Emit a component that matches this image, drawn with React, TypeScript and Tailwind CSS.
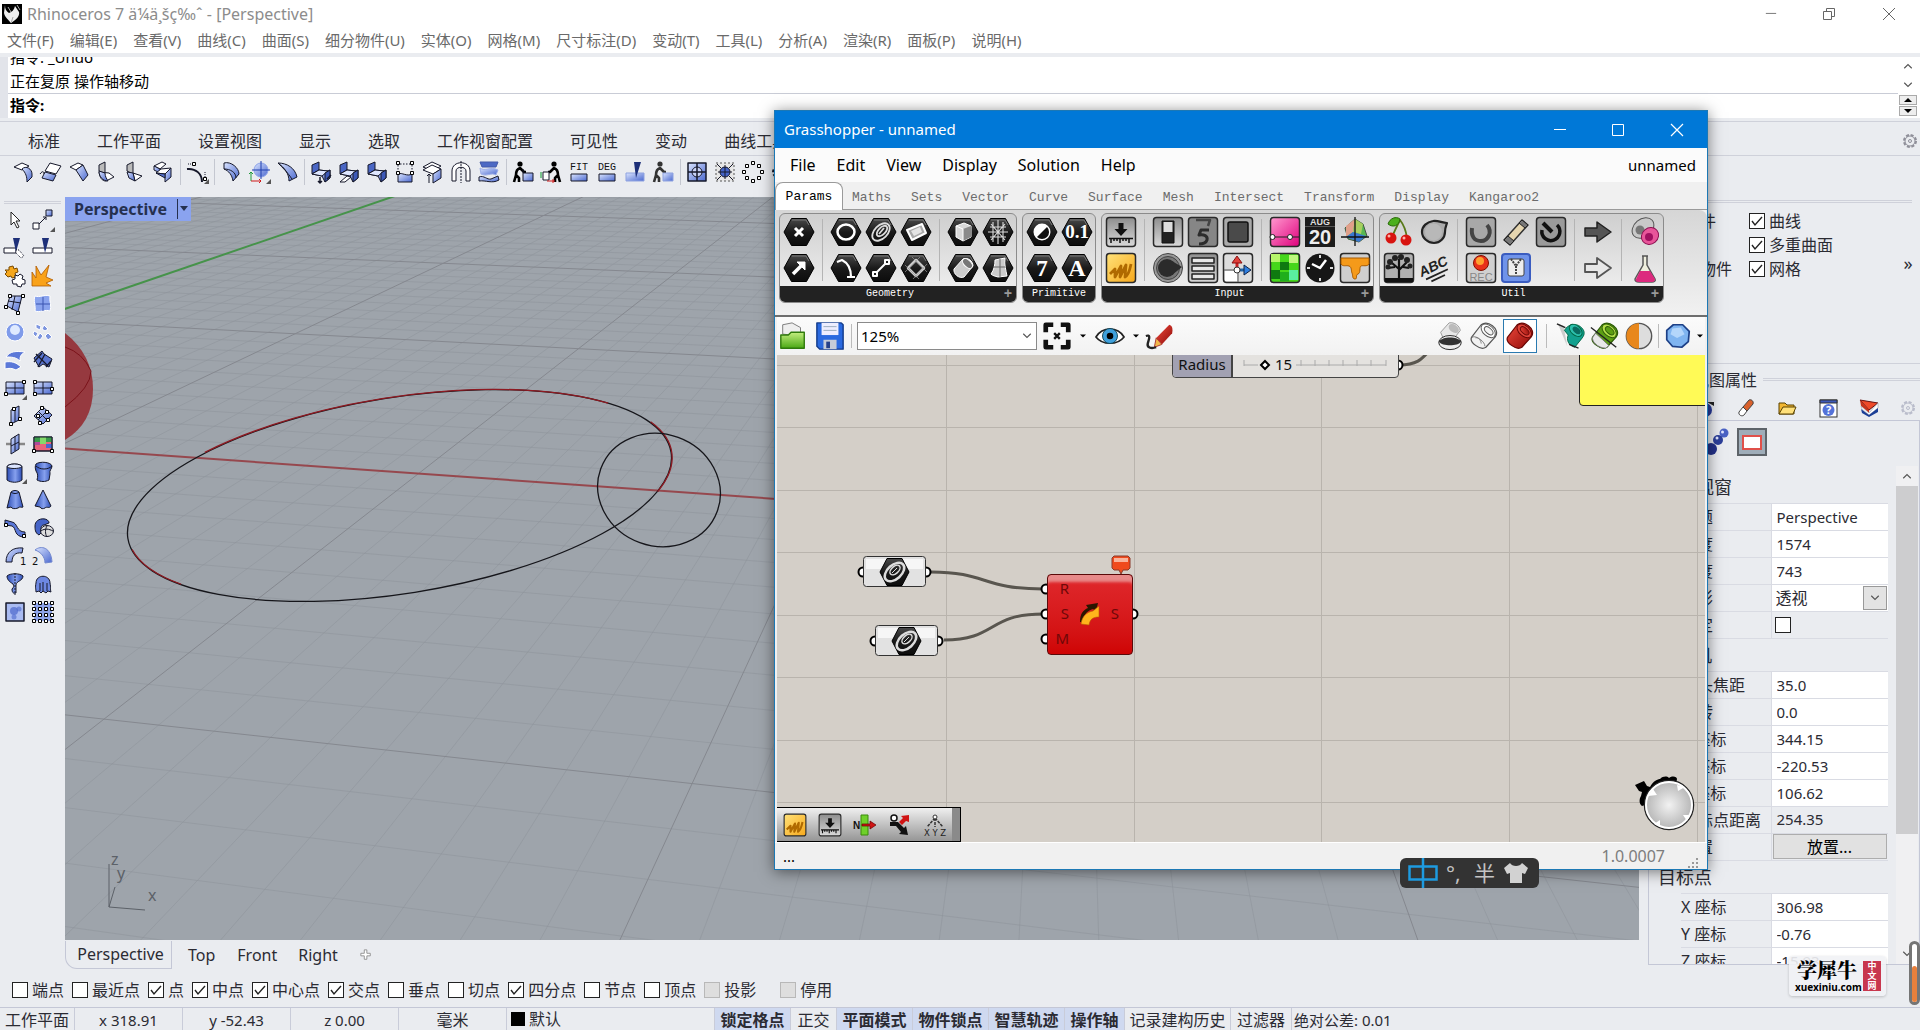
import type { ReactNode } from "react";

/* ---------- shared gradients ---------- */
function Gradients() {
  return (
    <svg className="absolute size-0" aria-hidden="true">
      <defs>
        <linearGradient id="bl" x1="0" y1="0" x2="1" y2="1">
          <stop offset="0" stopColor="#dbe5ff" />
          <stop offset="1" stopColor="#4a68cf" />
        </linearGradient>
        <linearGradient id="dk" x1="0" y1="0" x2="1" y2="0">
          <stop offset="0" stopColor="#2c4db4" />
          <stop offset="0.55" stopColor="#86a0ee" />
          <stop offset="1" stopColor="#2c4db4" />
        </linearGradient>
        <linearGradient id="hx" x1="0" y1="0" x2="0" y2="1">
          <stop offset="0" stopColor="#4a4a4a" />
          <stop offset="0.5" stopColor="#1a1a1a" />
          <stop offset="1" stopColor="#0c0c0c" />
        </linearGradient>
        <linearGradient id="gr" x1="0" y1="0" x2="0" y2="1">
          <stop offset="0" stopColor="#8e8e8e" />
          <stop offset="1" stopColor="#d9d9d9" />
        </linearGradient>
        <linearGradient id="pk" x1="0" y1="0" x2="1" y2="1">
          <stop offset="0" stopColor="#ff9ad0" />
          <stop offset="1" stopColor="#e0007c" />
        </linearGradient>
        <linearGradient id="rd" x1="0" y1="0" x2="1" y2="1">
          <stop offset="0" stopColor="#f04a3c" />
          <stop offset="1" stopColor="#8e0a08" />
        </linearGradient>
        <linearGradient id="gn" x1="0" y1="0" x2="0" y2="1">
          <stop offset="0" stopColor="#c4ee80" />
          <stop offset="1" stopColor="#4aa814" />
        </linearGradient>
        <linearGradient id="ye" x1="0" y1="0" x2="1" y2="1">
          <stop offset="0" stopColor="#ffe27a" />
          <stop offset="1" stopColor="#f7a81b" />
        </linearGradient>
        <radialGradient id="ball" cx="0.5" cy="0.5" r="0.5">
          <stop offset="0" stopColor="#f2f2f2" />
          <stop offset="1" stopColor="#b4b4b4" />
        </radialGradient>
      </defs>
    </svg>
  );
}

/* ---------- Rhino icons, 24 x 24 ---------- */
function R({ children }: { children: ReactNode }) {
  return (
    <svg viewBox="0 0 24 24" className="size-6 shrink-0" fill="url(#bl)" stroke="#16182a" strokeWidth="1" strokeLinejoin="round">
      {children}
    </svg>
  );
}
const Corner = () => <path d="M24 19v5h-5z" fill="#555" stroke="none" />;
const Sq = ({ x, y }: { x: number; y: number }) => <rect x={x - 1.5} y={y - 1.5} width="3" height="3" fill="#fff" stroke="#000" />;
/* the S-shaped sheet shared by the blend and match commands */
const Step = () => (
  <>
    <path d="M3 5l7-3v8l-7 4z" fill="#4a66c4" />
    <path d="M10 10l9 1 2-1v8l-5 4-3-6-10-2z" />
    <path d="M3 14l7-4 9 1-6 5z" fill="#dfe7ff" />
    <path d="M16 13l5-3v8l-5 4z" fill="#3d59b8" />
  </>
);
const Person = ({ c }: { c: string }) => (
  <>
    <circle cx="9" cy="4" r="2.6" fill={c} stroke="none" />
    <path d="M3 22l2-7 3 3v4M5 15c0-4 1-6 4-7l4 4 2 0" fill="none" stroke={c} strokeWidth="2.600" />
  </>
);

const topGroups: { name: string; icon: ReactNode }[][] = [
  [
    { name: "曲面圆角", icon: <R><path d="M3 7l8-4 7 3-7 4z" fill="#fff" /><path d="M11 9c4-4 10 0 10 5v3l-5 5c0-5-1-9-5-13z" /></R> },
    { name: "延伸曲面", icon: <R><path d="M11 3l11 3-5 8-11-3z" fill="#fff" /><path d="M6 12l11 3-3 6-11-3z" /><path d="M1 14c3-4 4-2 4 0" fill="none" /></R> },
    { name: "曲面斜角", icon: <R><path d="M3 7l8-4 5 2-7 5z" fill="#fff" /><path d="M9 10l7-5 5 10-5 6z" /></R> },
    { name: "不等距圆角", icon: <R><path d="M4 5l6-3v12l-6-3z" fill="#bbb" /><path d="M4 12c1 6 3 9 7 9l8-4-5-4z" fill="#fff" /><path d="M4 11l6 2c0 4 2 6 3 8-5 0-9-4-9-10z" /></R> },
    { name: "不等距斜角", icon: <R><path d="M4 5l6-3v12l-6-3z" fill="#bbb" /><path d="M10 13l9 3-7 5z" fill="#fff" /><path d="M4 12l6 1 2 8-6-3z" /></R> },
    { name: "混接曲面", icon: <R><path d="M3 6l8-4 4 2-6 5z" fill="#fff" /><path d="M3 6l6 3v4l-6-3z" /><path d="M5 13l5-4 10-1-6 6z" fill="#fff" /><path d="M14 14l6-6v9l-6 5z" /><path d="M5 13l9 1v4z" fill="#5672d0" /></R> },
  ],
  [{ name: "可调式混接曲线", icon: <R><path d="M2 9c9-1 15 5 15 13" fill="none" strokeWidth="2" /><path d="M3 4h5m12 8v6" fill="none" strokeDasharray="1 1" /><Sq x={9} y={4} /><Sq x={20} y={19} /><Corner /></R> }],
  [
    { name: "偏移曲面", icon: <R><path d="M5 3c7-2 15 5 15 11l-6 7c-1-6-4-10-9-12z" /><path d="M5 9c6 0 12 3 12 9" fill="none" /></R> },
    { name: "设置工作平面", icon: <R><circle cx="14" cy="10" r="7" stroke="#8fa4e8" /><path d="M14 1v18M5 10h18" fill="none" stroke="#1f3fae" /><path d="M4 12v9m-2-7l2-2 2 2" stroke="#1f9a3a" fill="none" /><path d="M4 21h10m-2-2l2 2-2 2" stroke="#d01818" fill="none" /><Corner /></R> },
    { name: "对称曲面", icon: <R><path d="M3 3c9 0 17 5 19 14l-8 4c0-7-4-13-11-18z" /><path d="M3 3c5 5 10 10 14 16" fill="none" /></R> },
  ],
  [
    { name: "移动曲面", icon: <R><Step /><path d="M11 17v6m-2-2l2 2 2-2M18 19l4-4" fill="none" strokeWidth="1.500" /></R> },
    { name: "衔接曲面", icon: <R><Step /><path d="M3 22l7-6 4 1-6 5z" fill="#fff" /></R> },
    { name: "合并曲面", icon: <R><Step /></R> },
    { name: "调整边缘", icon: <R><path d="M5 14c4-2 9 3 14 0v8H5z" /><path d="M4 4h16M5 5v7m14-7v7" fill="none" strokeDasharray="1.5 1.5" /><Sq x={5} y={3} /><Sq x={19} y={3} /><Sq x={5} y={13} /><Sq x={19} y={13} /></R> },
    { name: "叠层", icon: <R><path d="M2 7l9-5 9 4-8 5z" fill="#fff" /><path d="M2 10l9-5 9 4-8 5z" fill="#fff" /><path d="M12 14l8-5v9l-8 5z" /><path d="M8 23v-9m-2 2l2-2 2 2" fill="none" /></R> },
    { name: "对称", icon: <R><path d="M3 21V11c0-11 18-11 18 0v10h-4V11c0-5-10-5-10 0v10z" fill="#fff" /><path d="M12 1v22" strokeDasharray="2 1" fill="none" /></R> },
    { name: "重建", icon: <R><path d="M3 2h18l-2 5H5z" stroke="#445aa8" fill="#4d69c4" /><path d="M3 8c5 4 10-2 18 2l-2 5c-5-3-9 2-15-1z" stroke="#9fb0ea" /><path d="M2 17c5-2 8 3 12 2l7-3 1 4c-7 4-13 0-20 1z" /></R> },
  ],
  [
    { name: "推", icon: <R><Person c="#000" /><rect x="12" y="13" width="10" height="8" /><path d="M12 13V9" /></R> },
    { name: "拉", icon: <R><g transform="translate(24 0) scale(-1 1)"><Person c="#000" /></g><rect x="4" y="12" width="6" height="8" fill="#fff" /><path d="M2 12v6" stroke="#0a9a2a" /><path d="M8 21h8m-2-2v4" stroke="#d01818" /></R> },
    { name: "FIT", icon: <R><text x="12" y="10" textAnchor="middle" fontSize="10" fill="#111" stroke="none" fontFamily="Liberation Mono">FIT</text><rect x="4" y="14" width="16" height="7" /></R> },
    { name: "DEG", icon: <R><text x="12" y="10" textAnchor="middle" fontSize="10" fill="#111" stroke="none" fontFamily="Liberation Mono">DEG</text><rect x="4" y="14" width="16" height="7" /></R> },
    { name: "切割", icon: <R><path d="M3 13h18v8H3z" stroke="#8ea2e0" /><path d="M11 2h7l-5 16z" fill="#1d2f78" stroke="none" /></R> },
    { name: "收缩", icon: <R><Person c="#333" /><rect x="12" y="13" width="10" height="8" stroke="#8ea2e0" /></R> },
  ],
  [
    { name: "球面", icon: <R><rect x="3" y="3" width="18" height="18" strokeWidth="1.500" /><circle cx="12" cy="12" r="5" fill="#c9d3f7" /><path d="M12 3v18M3 12h18" fill="none" strokeWidth="1.500" /></R> },
    { name: "方向", icon: <R><rect x="3" y="3" width="18" height="18" fill="#e6e6e6" stroke="#555" strokeDasharray="2 2" /><circle cx="12" cy="12" r="5" fill="#4564c8" /><path d="M12 5v14M5 12h14M4 4l4 4m12-4l-4 4M4 20l4-4m12 4l-4-4" fill="none" /></R> },
    { name: "阵列", icon: <R><Sq x={12} y={3} /><Sq x={18} y={6} /><Sq x={21} y={12} /><Sq x={18} y={18} /><Sq x={12} y={21} /><Sq x={6} y={18} /><Sq x={3} y={12} /><Sq x={6} y={6} /></R> },
    { name: "更多", icon: <R><circle cx="9" cy="12" r="5" fill="none" strokeWidth="2" strokeDasharray="3 2" /></R> },
  ],
];

const leftIcons: { name: string; icon: ReactNode }[] = [
  { name: "选择", icon: <R><path d="M8 4v13l3-3 3 6 2-1-3-6h4z" fill="#fff" stroke="#222" /></R> },
  { name: "移动点", icon: <R><path d="M8 16l7-7m-3 0h3v3" fill="none" /><rect x="2" y="15" width="6" height="6" fill="#fff" /><rect x="15" y="2" width="6" height="6" /><Corner /></R> },
  { name: "修剪", icon: <R><path d="M1 12h12v5H1z" fill="#fff" /><path d="M10 2h7l-4 14z" fill="#1d2f78" stroke="none" /><path d="M13 14l3 0 5 6-3 2-5-5z" fill="#fff" strokeDasharray="1 1" /></R> },
  { name: "分割", icon: <R><path d="M2 12h19v5H2z" fill="#fff" /><path d="M11 2h7l-4 15z" fill="#1d2f78" stroke="none" /></R> },
  { name: "组合", icon: <R><path d="M2 6l4 0 0-3 4-1 1 3 3-1 1 4-3 1 1 4-4 1-1-2-3 1-3-3 2-2z" fill="#f5a71c" stroke="#7a4a00" /><path d="M12 11l3 1 2-2 3 2-1 3 3 1 0 4-3 0-1 3-4-1 0-2-4 0-1-4 3-1z" fill="#fff" /></R> },
  { name: "炸开", icon: <R><path d="M1 8l4 6V2l5 9 8-10-3 12 7 3-7 3 5 3H1z" fill="#f9a21a" stroke="#b05a00" strokeWidth="0.8" /></R> },
  { name: "角点曲面", icon: <R><path d="M7 4l12 0-4 16-11-6z" /><path d="M12 4l-3 14M5 9l13 2" fill="none" /><Sq x={7} y={4} /><Sq x={20} y={4} /><Sq x={3} y={15} /><Sq x={15} y={21} /></R> },
  { name: "网线曲面", icon: <R><path d="M4 4c5 2 9-2 15 0-1 5 2 10 0 15-5-2-10 2-15 0 1-5-2-10 0-15z" stroke="#fff" fill="#8aa4ee" /><path d="M12 5v14M5 12h14" stroke="#3a55b0" fill="none" /></R> },
  { name: "球体", icon: <R><circle cx="12" cy="12" r="9" stroke="#fff" fill="#7f9bea" /><circle cx="12" cy="10" r="5" fill="#dfeaff" stroke="none" /></R> },
  { name: "放样", icon: <R><g stroke="#fff" fill="#7d95df"><path d="M5 4l5 2-1 4-4-2zM13 5l4 4-3 2-3-2zM3 11l4 2-2 4-3-3zM17 13l4 4-4 3-3-4zM9 13l3 3-3 4-3-2z" /></g></R> },
  { name: "双轨扫掠", icon: <R><path d="M3 9c4-6 10-6 19-5-5 3-5 5-5 9-4-4-9-4-14-4z" stroke="#fff" fill="#5b78d8" /><path d="M2 14c6-1 11 0 16 5l-5 3c-4-2-7-2-11-1z" stroke="#fff" fill="#5b78d8" /></R> },
  { name: "嵌面", icon: <R><path d="M3 10l8-7 2 3 8 5-3 8-6-3-4 3z" fill="#5a75d0" /><path d="M5 6l12 12M3 14l8-9M14 6l-7 13m13-6l-5 6" fill="none" strokeWidth="1.300" /></R> },
  { name: "矩形平面", icon: <R><rect x="3" y="6" width="18" height="12" /><path d="M12 6v12M3 12h18" fill="none" /><Sq x={21} y={6} /><Sq x={3} y={18} /><Corner /></R> },
  { name: "三点平面", icon: <R><rect x="3" y="6" width="18" height="12" /><path d="M12 6v12M3 12h18" fill="none" /><Sq x={4} y={6} /><Sq x={4} y={18} /><Sq x={21} y={13} /></R> },
  { name: "垂直平面", icon: <R><path d="M8 6l8-4v14l-8 4z" /><path d="M12 4v14" fill="none" /><Sq x={11} y={5} /><Sq x={17} y={15} /><Sq x={8} y={20} /></R> },
  { name: "逼近点平面", icon: <R><path d="M12 3l9 8-9 9-9-8z" /><path d="M7 7l9 9M16 7l-9 9" fill="none" /><Sq x={11} y={4} /><Sq x={16} y={8} /><Sq x={7} y={12} /><Sq x={17} y={16} /><Sq x={9} y={19} /></R> },
  { name: "切割用平面", icon: <R><path d="M3 12h19" stroke="#888" strokeWidth="2.5" /><path d="M8 7l8-5v15l-8 5z" /><path d="M12 4v15M8 14l8-4" fill="none" /></R> },
  { name: "图片平面", icon: <R><path d="M3 5h18v14H3z" fill="#e9637a" /><path d="M3 5h18v5H3z" fill="#3a9a4a" stroke="none" /><path d="M9 5h6v7H9z" fill="#84d96a" stroke="none" /><path d="M15 12h6v4h-6z" fill="#4a66d0" stroke="none" /><path d="M3 10h6v3H3z" fill="#b04a9a" stroke="none" /><rect x="3" y="5" width="18" height="14" fill="none" /><Sq x={3} y={19} /><Sq x={21} y={19} /></R> },
  { name: "挤出", icon: <R><path d="M4 7c0-4 15-4 15 0v13c-4 3-11 3-15 0z" fill="url(#dk)" /><path d="M4 7c3 2 11 2 15 0 0-4-15-4-15 0z" fill="#dbe5ff" /><Corner /></R> },
  { name: "沿曲线挤出", icon: <R><path d="M5 4c4-3 15-2 16 2 0 3-3 4-2 8l-1 6c-4 2-8 2-12 0 1-4 1-6-1-9-1-3-1-5 0-7z" fill="url(#dk)" /><path d="M5 6c4 4 12 4 16 0" fill="none" /></R> },
  { name: "锥状挤出", icon: <R><path d="M8 4c2-2 6-2 8 0l4 15c-2 1-3-1-5 1-3 1-6 1-7-1l-4 1z" fill="url(#dk)" /><path d="M8 4c2 2 6 2 8 0" fill="none" /></R> },
  { name: "挤出至点", icon: <R><path d="M12 2l8 16c-2 3-4 0-6 2-2 1-4 1-5-1l-5-1z" fill="url(#dk)" /></R> },
  { name: "彩带", icon: <R><path d="M2 4l7 2c6 1 4 10 13 10v5c-12 0-8-9-13-11L2 9z" fill="#5b78d8" /><Sq x={3} y={9} /><Sq x={21} y={20} /></R> },
  { name: "往曲面法线挤出", icon: <R><path d="M4 10c0-9 14-9 14-3l-5 2c-4 0-3 5-2 7l-3 3c-4-2-4-6-4-9z" fill="#4564c8" /><ellipse cx="16" cy="15" rx="6.500" ry="5.500" fill="#ddd" /><path d="M10 15c4-3 8-2 12 0M16 10c-2 3-2 8 0 11" fill="none" /></R> },
  { name: "单轨扫掠", icon: <R><path d="M3 18C3 8 10 3 20 4l-1 5c-7-1-10 3-10 9z" /><text x="17" y="21" fontSize="10" fill="#111" stroke="none" fontFamily="DejaVu Sans">1</text></R> },
  { name: "双轨扫掠二", icon: <R><path d="M4 6c6-5 16-3 17 12l-7 1c0-6-4-11-10-13z" stroke="#7288cf" /><text x="1" y="21" fontSize="10" fill="#111" stroke="none" fontFamily="DejaVu Sans">2</text></R> },
  { name: "旋转成形", icon: <R><path d="M4 4c3-3 13-3 16 0 0 5-7 5-7 9v8c-3 1-4-1-4-4 2-2 2-3 1-5-3-2-6-4-6-8z" fill="url(#dk)" /><path d="M12 1v22" strokeDasharray="2 1" fill="none" /></R> },
  { name: "布帘曲面", icon: <R><path d="M5 20c0-3-1-4 0-9 0-9 14-9 14 0 1 5 0 6 1 9l-3-1-2 2-3-2-2 2-2-2z" fill="#6d88e2" /><path d="M9 11v8m3-9v9m4-8v8" fill="none" /></R> },
  { name: "高度场", icon: <R><rect x="3" y="3" width="18" height="18" fill="#a9bbf2" strokeWidth="1.500" /><circle cx="11" cy="11" r="4" fill="#4b66cc" stroke="none" opacity=".7" /><circle cx="16" cy="9" r="2.500" fill="#4b66cc" stroke="none" opacity=".6" /><circle cx="11" cy="17" r="2.500" fill="#4b66cc" stroke="none" opacity=".6" /></R> },
  {
    name: "点格曲面",
    icon: (
      <R>
        <rect x="3" y="3" width="18" height="18" fill="#8ea4ea" stroke="none" />
        {[3, 9, 15, 21].map((x) => [3, 9, 15, 21].map((y) => <Sq key={`${x}-${y}`} x={x} y={y} />))}
      </R>
    ),
  },
];

/* ---------- Grasshopper icons, 32 x 32 ---------- */
function G({ children }: { children: ReactNode }) {
  return (
    <svg viewBox="0 0 32 32" className="size-8 shrink-0" fill="none" strokeLinejoin="round">
      {children}
    </svg>
  );
}
function Hex({ children }: { children: ReactNode }) {
  return (
    <G>
      <polygon points="8.500,2.500 23.500,2.500 31,16 23.500,29.500 8.500,29.500 1,16" fill="url(#hx)" stroke="#000" />
      <path d="M9 4h14l3 5" stroke="#777" />
      <g stroke="#fff" strokeWidth="2">{children}</g>
    </G>
  );
}
function Box({ children, fill = "url(#gr)" }: { children: ReactNode; fill?: string }) {
  return (
    <G>
      <rect x="1.500" y="1.500" width="29" height="29" rx="3" fill={fill} stroke="#2a2a2a" strokeWidth="1.500" />
      {children}
    </G>
  );
}
const Scribble = () => <Box fill="url(#ye)"><path d="M5 22l5-5 0 8 6-11-1 11 6-12-1 12c4-2 5-8 6-13" stroke="#b06a00" strokeWidth="2.800" /></Box>;
const SliderBox = () => <Box><path d="M13.500 7h5v6h4L16 20l-6.500-7h4z" fill="#111" /><path d="M4 22.500h24M6 22v5m3-5v3m3-3v3m3-3v5m3-5v3m3-3v3m3-3v5" stroke="#111" strokeWidth="1.500" /></Box>;
const Drum = ({ top, side, line = "#333" }: { top: string; side: string; line?: string }) => (
  <>
    <path d="M3 17L13 4c4-3 8-2 12 1s6 8 3 12L18 28c-3 2-7 1-11-2s-6-6-4-9z" fill={side} stroke={line} strokeWidth="1.300" />
    <ellipse cx="20.500" cy="10.500" rx="5.500" ry="9" transform="rotate(-48 20.500 10.500)" fill={top} stroke={line} />
    <ellipse cx="21" cy="10.500" rx="3" ry="5.500" transform="rotate(-48 21 10.500)" fill={side} stroke={line} />
  </>
);

type Cell = { name: string; icon: ReactNode };
type Panel = { title: string; more: boolean; groups: Cell[][] };
/* every group lists its cells column by column */
const panels: Panel[] = [
  {
    title: "Geometry",
    more: true,
    groups: [
      [
        { name: "Point", icon: <Hex><path d="M12 12l8 8m0-8l-8 8" strokeWidth="3" /></Hex> },
        { name: "Vector", icon: <Hex><path d="M10 22l8-8" strokeWidth="3.500" /><path d="M14 10h8v8z" fill="#fff" strokeWidth="1" /></Hex> },
      ],
      [
        { name: "Circle", icon: <Hex><ellipse cx="16" cy="16" rx="8.500" ry="7.500" strokeWidth="2.500" /></Hex> },
        { name: "Circular Arc", icon: <Hex><path d="M7 10l5-2c6 3 9 9 9 17M17 25h8" strokeWidth="2.200" /></Hex> },
        { name: "Curve", icon: <Hex><g strokeWidth="1.800" stroke="#ddd"><ellipse cx="16" cy="16" rx="10.500" ry="6.500" transform="rotate(-45 16 16)" /><ellipse cx="17" cy="15" rx="6.500" ry="3.500" transform="rotate(-45 17 15)" /><path d="M14 18l5-6" /></g></Hex> },
        { name: "Line", icon: <Hex><path d="M11 21L21 11" /><path d="M8 20h4v4H8zM20 8h4v4h-4z" fill="#222" /></Hex> },
        { name: "Plane", icon: <Hex><path d="M7 14l15-6 4 9-14 7z" fill="#aaa" /><path d="M11 15l9-4 2 5-8 4z" fill="#e4e4e4" stroke="none" /></Hex> },
        { name: "Rectangle", icon: <Hex><path d="M16 8l8 8-8 8-8-8z" stroke="#ccc" strokeWidth="2.500" /><path d="M12 5l15 15M20 5L5 20M5 13l14 14M27 12L13 27" strokeWidth="0.700" stroke="#999" /></Hex> },
      ],
      [
        { name: "Box", icon: <Hex><path d="M9 10l8-3 7 3v11l-8 4-7-4z" fill="#d8d8d8" strokeWidth="1" /><path d="M16 13l8-3v11l-8 4z" fill="#8a8a8a" stroke="none" /><path d="M9 10l7 3v12" strokeWidth="1" /></Hex> },
        { name: "Brep", icon: <Hex><path d="M7 17l9-10c5-2 10 2 10 7l-9 11c-5 2-11-3-10-8z" fill="#ccc" strokeWidth="1" /><ellipse cx="20.500" cy="11.500" rx="3.500" ry="6" transform="rotate(-45 20.500 11.500)" fill="#777" strokeWidth="1" /></Hex> },
        { name: "Mesh", icon: <Hex><g strokeWidth="1.100" stroke="#ddd"><path d="M16 4v24M6 16h20M9 8l14 16M23 8L9 24M8 11h16M8 21h16M11 6v20M21 6v20" /></g></Hex> },
        { name: "Surface", icon: <Hex><path d="M13 8l10-2c-1 7 1 12 2 18l-9 1c-3-1-5-1-7-3 3-4 4-9 4-14z" fill="#ccc" strokeWidth="1" /><path d="M18 7v18M12 15h11" stroke="#666" strokeWidth="1" /></Hex> },
      ],
    ],
  },
  {
    title: "Primitive",
    more: false,
    groups: [
      [
        { name: "Boolean", icon: <Hex><circle cx="16" cy="16" r="7.500" fill="#fff" /><path d="M21 11A7 7 0 0 1 11 21z" fill="#111" stroke="none" /></Hex> },
        { name: "Integer", icon: <Hex><text x="16" y="24" textAnchor="middle" fontSize="23" fontWeight="bold" fill="#fff" stroke="none" fontFamily="Liberation Serif">7</text></Hex> },
        { name: "Number", icon: <Hex><text x="16" y="22" textAnchor="middle" fontSize="19" fontWeight="bold" fill="#fff" stroke="none" fontFamily="Liberation Serif">0.1</text></Hex> },
        { name: "Text", icon: <Hex><text x="16" y="24" textAnchor="middle" fontSize="24" fontWeight="bold" fill="#fff" stroke="none" fontFamily="Liberation Serif">A</text></Hex> },
      ],
    ],
  },
  {
    title: "Input",
    more: true,
    groups: [
      [
        { name: "Number Slider", icon: <SliderBox /> },
        { name: "Panel", icon: <Scribble /> },
      ],
      [
        { name: "Boolean Toggle", icon: <Box><rect x="10" y="5" width="12" height="22" fill="#222" stroke="#111" /><rect x="11.500" y="6" width="9" height="10" fill="#ddd" /></Box> },
        { name: "Knob", icon: <G><circle cx="16" cy="16" r="14.500" fill="#999" stroke="#444" /><circle cx="16" cy="16" r="11.500" fill="#777" stroke="#444" /><circle cx="15" cy="16" r="9" fill="#2b2b2b" /><path d="M20 9l10 6-10 8z" fill="#2b2b2b" /></G> },
        { name: "Digit Scroller", icon: <Box fill="#868686"><path d="M9 4h14l-2 6" stroke="#444" strokeWidth="2.500" /><path d="M22 14h-8l-2 5c5-1 9 1 8 5-1 3-4 4-8 4" stroke="#2c2c2c" strokeWidth="3" /></Box> },
        { name: "Value List", icon: <Box><path d="M5 6h22v5H5zM5 14h22v5H5zM5 22h22v5H5z" fill="#e8e8e8" stroke="#222" strokeWidth="1.500" /></Box> },
        { name: "Button", icon: <Box fill="#aaa"><rect x="6" y="6" width="20" height="20" rx="2" fill="#4a4a4a" stroke="#111" strokeWidth="1.500" /></Box> },
        { name: "MD Slider", icon: <Box fill="#ddd"><path d="M3 19h12v10H3z" fill="#fff" /><path d="M2 18h14v12" stroke="#555" /><path d="M15 18V11" stroke="#c22" strokeWidth="3" /><path d="M10 11l5-7 5 7z" fill="#e0403a" stroke="#811" /><path d="M15 18h8" stroke="#26a" strokeWidth="3" /><path d="M22 13l7 5-7 5z" fill="#2f7fe0" stroke="#124" /><circle cx="15" cy="18" r="3" fill="#fff" stroke="#333" /></Box> },
      ],
      [
        { name: "Gradient", icon: <Box fill="url(#pk)"><path d="M2 21h28" stroke="#222" /><circle cx="3.500" cy="21" r="2.500" fill="#fff" stroke="#222" /><circle cx="21" cy="21" r="2.500" fill="#fff" stroke="#222" /></Box> },
        { name: "Colour Swatch", icon: <Box fill="#45d61a"><path d="M2 2h9v8H2z" fill="#b6f56a" /><path d="M20 3h9v8h-9z" fill="#bff77e" /><path d="M11 10h9v8h-9zM2 18h9v9H2z" fill="#0f7a10" /><path d="M20 18h9v10h-9z" fill="#5af0a0" /><path d="M11 20h9v9h-9z" fill="#1fae1c" /></Box> },
        { name: "Calendar", icon: <G><rect x="1" y="1" width="30" height="30" fill="#1c1c1c" /><text x="16" y="9" textAnchor="middle" fontSize="9" fontWeight="bold" fill="#ddd" fontFamily="Liberation Sans">AUG</text><path d="M1 10.500h30" stroke="#555" /><text x="16" y="28" textAnchor="middle" fontSize="20" fontWeight="bold" fill="#eee" fontFamily="Liberation Sans">20</text></G> },
        { name: "Clock", icon: <G><circle cx="16" cy="16" r="14.500" fill="#161616" /><path d="M8 12l8 4 6-8" stroke="#fff" strokeWidth="2.500" /><path d="M16 3v3m0 20v3M3 16h3m20 0h3" stroke="#ddd" strokeWidth="2" /></G> },
        { name: "Colour Picker", icon: <G><path d="M16 3l8 5 4 12-8 6-11-3-3-11z" fill="#58b850" stroke="#454" /><path d="M7 10l9-7-2 13-7 5z" fill="#e0a08a" /><path d="M14 16l2-13 8 5-2 10z" fill="#a8cf60" /><path d="M7 21l7-5 13 4-7 6z" fill="#3a78d0" /><path d="M16 1v29M2 21h28" stroke="#111" strokeWidth="1.300" /></G> },
        { name: "Image Sampler", icon: <Box fill="#cfcfcf"><path d="M2 6h28v6c-2 3-6 1-8 2s0 7-3 8 0 5-3 5-2-4-3-6 0-6-3-7-6 1-8-2z" fill="#f59a1a" stroke="#a85a00" /></Box> },
      ],
    ],
  },
  {
    title: "Util",
    more: true,
    groups: [
      [
        { name: "Cherry Picker", icon: <G><path d="M9 21C12 14 15 8 17 4c4 5 6 11 7 18" stroke="#5a7a1a" strokeWidth="1.800" /><path d="M5 8c2-6 8-8 12-5-1 7-7 9-12 5z" fill="#4caf1c" stroke="#2a6a0a" /><circle cx="8" cy="22" r="5.500" fill="#d81410" /><circle cx="23" cy="24" r="5.500" fill="#d81410" /><circle cx="6" cy="20" r="1.500" fill="#ffb0a8" /><circle cx="21" cy="22" r="1.500" fill="#ffb0a8" /></G> },
        { name: "Param Viewer", icon: <Box fill="#b0b0b0"><path d="M16 29V17l-7-6m7 7l8-8M16 18V7m-4 8l-7 1m15-1l6 1" stroke="#111" strokeWidth="2.200" /><g fill="#222"><circle cx="7" cy="10" r="3" /><circle cx="12" cy="6" r="3" /><circle cx="18" cy="5" r="3" /><circle cx="24" cy="8" r="3" /><circle cx="27" cy="14" r="2.500" /><circle cx="5" cy="15" r="2.500" /></g><path d="M2 28h28" stroke="#111" strokeWidth="4" /></Box> },
        { name: "Relay", icon: <G><path d="M29 7c-1 3-2 5-2 9 0 6-5 11-11 11S4 22 4 16 9 6 15 5c5-1 9 2 14 2z" fill="#aaa" stroke="#222" strokeWidth="2.200" /><circle cx="15.500" cy="16" r="8.500" fill="#b8b8b8" /></G> },
        { name: "Scribble", icon: <G><g transform="rotate(-25 16 16)"><text x="16" y="19" textAnchor="middle" fontSize="14" fontWeight="bold" fontStyle="italic" fill="#222" fontFamily="Liberation Sans">ABC</text><path d="M4 23h24M8 27h15" stroke="#222" strokeWidth="1.800" /></g></G> },
      ],
      [
        { name: "Data Dam", icon: <Box fill="#a8a8a8"><path d="M7 12c-1 8 2 13 9 13s12-9 6-16" stroke="#444" strokeWidth="4" /></Box> },
        { name: "Data Recorder", icon: <Box fill="#d0d0d0"><circle cx="16" cy="11" r="7.500" fill="#e8301a" stroke="#801000" /><circle cx="15" cy="9" r="4" fill="#ffa030" /><text x="16" y="29" textAnchor="middle" fontSize="11" fill="#888" fontFamily="Liberation Sans">REC</text></Box> },
        { name: "Fitness Landscape", icon: <G><path d="M4 24L22 4l6 5-18 20z" fill="#e6d6b0" stroke="#333" strokeWidth="1.500" /><path d="M4 24l4-4 6 5-4 4zM19 7l3-3 6 5-3 3z" fill="#777" stroke="#222" /></G> },
        { name: "Cluster", icon: <G><rect x="2" y="2" width="28" height="28" rx="3" fill="#6f93ea" stroke="#3a5cc0" strokeWidth="2" /><rect x="8" y="7" width="16" height="17" rx="2" fill="#eee" stroke="#444" /><path d="M11 7l5 7 5-7M16 14v9" stroke="#444" strokeWidth="2" strokeDasharray="2 1" /></G> },
        { name: "Timer", icon: <Box fill="#9a9a9a"><path d="M7 14a9 9 0 1 0 15-5" stroke="#111" strokeWidth="3.500" /><path d="M8 7l9 9" stroke="#111" strokeWidth="4" /></Box> },
      ],
      [
        { name: "Data Output", icon: <G><path d="M3 12h12V6l14 10-14 10v-6H3z" fill="#555" stroke="#222" strokeWidth="1.500" /></G> },
        { name: "Data Input", icon: <G><path d="M3 12h12V6l14 10-14 10v-6H3z" fill="#e8e8e8" stroke="#555" strokeWidth="1.800" /></G> },
      ],
      [
        { name: "Galapagos", icon: <G><ellipse cx="14" cy="12" rx="12" ry="9" transform="rotate(-40 14 12)" fill="#c9c9c9" stroke="#555" /><circle cx="11" cy="14" r="4.500" fill="#777" /><ellipse cx="21" cy="20" rx="9" ry="8" transform="rotate(-40 21 20)" fill="#e8559a" stroke="#8a1050" /><circle cx="20" cy="21" r="4" fill="#a01060" /></G> },
        { name: "Flask", icon: <G><path d="M13 4h6M14 4v9L6 27c0 2 2 3 4 3h13c2 0 4-1 3-3L18 13V4" fill="#eed" stroke="#555" strokeWidth="1.500" /><path d="M11 19h10l5 8c0 2-1 3-3 3H10c-3 0-4-1-3-3z" fill="#dc2a7e" /></G> },
      ],
    ],
  },
];

/* ---------- viewport drawing ---------- */
type P = [number, number, number];
const ORIGIN: P = [-338, 227.5, 1];
const VANISH_X: P = [-6895, -238, 1];
const VANISH_Y: P = [1005, -232, 1];
/* projects construction-plane coordinates (in major grid units) to the viewport */
function project(u: number, v: number) {
  const a = -0.0477 * u;
  const b = 0.2945 * v;
  const w = 1 + a + b;
  return [
    (ORIGIN[0] + a * VANISH_X[0] + b * VANISH_Y[0]) / w,
    (ORIGIN[1] + a * VANISH_X[1] + b * VANISH_Y[1]) / w,
  ];
}
function lineAt(a: number[], b: number[]) {
  return `M${a[0].toFixed(1)} ${a[1].toFixed(1)}L${b[0].toFixed(1)} ${b[1].toFixed(1)}`;
}
const minor: string[] = [];
const major: string[] = [];
for (let i = -20; i <= 110; i++) {
  const u = i / 10;
  const end = project(u, 6);
  const start = project(u, Math.max(-2.8, -(0.95 - 0.0477 * u) / 0.2945));
  if (i !== 0) (i % 10 === 0 ? major : minor).push(lineAt(start, end));
}
for (let i = -20; i <= 60; i++) {
  const v = i / 10;
  if (i !== 0) (i % 10 === 0 ? major : minor).push(lineAt(project(-4, v), project(11, v)));
}

function Viewport() {
  return (
    <div className="relative min-h-0 flex-1 overflow-hidden bg-[#9ea4ab]">
      <svg className="absolute inset-0 size-full" fill="none" aria-label="Perspective viewport">
        <path d={minor.join("")} stroke="#8e949b" strokeWidth="1" opacity=".55" />
        <path d={major.join("")} stroke="#85888f" strokeWidth="1" />
        <path d={lineAt(project(0, 0), project(0, 6))} stroke="#46934a" strokeWidth="2" />
        <path d={lineAt(project(0, 0), project(11, 0))} stroke="#96484e" strokeWidth="2" />
        <path d="M0 136Q28 158 28 192T0 243z" fill="#96393f" />
        <path d="M0 150Q18 156 26 174Q26 190 0 210" stroke="#7a1219" />
        <g strokeWidth="1.300">
          <g transform="rotate(-9 334.500 298.500)">
            <ellipse cx="334.500" cy="298.500" rx="275" ry="98" stroke="#15151a" />
            <path d="M149 225.500A275 98 0 0 1 555 240" stroke="#8e1a22" />
            <path d="M594 265A275 98 0 0 1 590 335" stroke="#8e1a22" />
            <path d="M62 310A275 98 0 0 0 105 352" stroke="#8e1a22" />
          </g>
          <ellipse cx="594" cy="293" rx="62" ry="56" transform="rotate(20 594 293)" stroke="#15151a" />
        </g>
        <path d="M44 667v43l36 3M44 710l6-20" stroke="#5c6168" />
        <g fill="#5c6168" fontSize="16" fontFamily="Noto Sans">
          <text x="46" y="668">z</text>
          <text x="52" y="682">y</text>
          <text x="83" y="704">x</text>
        </g>
      </svg>
      <div className="relative flex h-6 w-[126px] items-center bg-[#8aa3ef]">
        <span className="w-[112px] pl-[9px] text-[16px] font-bold leading-5 text-[#25304f]">Perspective</span>
        <button aria-label="视图菜单" className="flex h-5 items-center border-l border-[#25304f] pl-px">
          <svg viewBox="0 0 10 6" className="h-[6px] w-[10px]"><path d="M1 0h8L5 5z" fill="#25304f" /></svg>
        </button>
      </div>
    </div>
  );
}

/* ---------- form bits ---------- */
function Tick({ label, checked = false, disabled = false }: { label: string; checked?: boolean; disabled?: boolean }) {
  return (
    <label className="inline-flex items-center gap-1 whitespace-nowrap text-[16px] leading-5">
      <span className="grid">
        <input
          type="checkbox"
          aria-label={label}
          defaultChecked={checked}
          disabled={disabled}
          className="peer col-start-1 row-start-1 size-4 appearance-none border border-[#222] bg-white disabled:border-[#b8b8b8] disabled:bg-[#dedede]"
        />
        <svg viewBox="0 0 16 16" className="pointer-events-none invisible col-start-1 row-start-1 size-4 peer-checked:visible">
          <path d="M3 8l3 4 7-8" fill="none" stroke="#222" strokeWidth="1.400" />
        </svg>
      </span>
      <span>{label}</span>
    </label>
  );
}
const Gear = ({ c }: { c: string }) => (
  <svg viewBox="0 0 16 16" className="size-4 shrink-0" fill="none" stroke={c}>
    <circle cx="8" cy="8" r="6" strokeWidth="2" strokeDasharray="3 1.700" />
    <circle cx="8" cy="8" r="5" />
    <circle cx="8" cy="8" r="1.500" />
  </svg>
);
const Chevron = ({ up = false }: { up?: boolean }) => (
  <svg viewBox="0 0 12 8" className="h-[6px] w-[10px]" fill="none" stroke="#555" strokeWidth="1.500"><path d={up ? "M1 7l5-5 5 5" : "M1 1l5 5 5-5"} /></svg>
);
const Caret = () => <svg viewBox="0 0 8 4" className="h-1 w-[6px] shrink-0"><path d="M0 0h8L4 4z" fill="#000" /></svg>;

/* ---------- right panel ---------- */
type Row = { label: string; value?: string; kind?: "select" | "check" | "static" | "button" };
const sections: { title: string; rows: Row[] }[] = [
  {
    title: "视窗",
    rows: [
      { label: "标题", value: "Perspective" },
      { label: "宽度", value: "1574" },
      { label: "高度", value: "743" },
      { label: "投影", value: "透视", kind: "select" },
      { label: "锁定", kind: "check" },
    ],
  },
  {
    title: "摄像机",
    rows: [
      { label: "镜头焦距", value: "35.0" },
      { label: "旋转", value: "0.0" },
      { label: "X 座标", value: "344.15" },
      { label: "Y 座标", value: "-220.53" },
      { label: "Z 座标", value: "106.62" },
      { label: "目标点距离", value: "254.35", kind: "static" },
      { label: "位置", value: "放置...", kind: "button" },
    ],
  },
  {
    title: "目标点",
    rows: [
      { label: "X 座标", value: "306.98" },
      { label: "Y 座标", value: "-0.76" },
      { label: "Z 座标", value: "-15.93" },
    ],
  },
];

function Value({ row }: { row: Row }) {
  if (row.kind === "select")
    return (
      <div className="grid h-[26px] items-center bg-white">
        <select aria-label={row.label} className="col-start-1 row-start-1 h-[26px] w-full appearance-none bg-transparent pl-1 text-[16px]">
          <option>{row.value}</option>
        </select>
        <span className="pointer-events-none col-start-1 row-start-1 mr-px flex h-6 w-6 items-center justify-center justify-self-end border border-[#999] bg-[#e3e3e3]"><Chevron /></span>
      </div>
    );
  if (row.kind === "check") return <input type="checkbox" aria-label={row.label} className="ml-[3px] block size-4 appearance-none border border-[#222] bg-white" />;
  if (row.kind === "static") return <span className="block pl-[5px] text-[15px]">{row.value}</span>;
  if (row.kind === "button") return <button className="ml-px h-[25px] w-[114px] border border-[#adadad] bg-[#e1e1e1] text-[16px] leading-5 text-black">{row.value}</button>;
  return <input aria-label={row.label} defaultValue={row.value} className="block h-[26px] w-full bg-white pl-[5px] text-[15px]" />;
}

function RightPanel() {
  return (
    <aside className="flex w-[281px] shrink-0 flex-col text-[#2b2b33]">
      <div className="mx-2 mt-[3px] h-[3px] shrink-0 border-y border-[#cfd1da]" />
      <div className="flex h-[160px] shrink-0 pl-[9px] pt-[8px]">
        <div className="flex w-[101px] flex-col gap-1">
          <Tick label="点物件" checked />
          <Tick label="曲面" checked />
          <Tick label="细分物件" checked />
        </div>
        <div className="flex flex-1 flex-col gap-1">
          <Tick label="曲线" checked />
          <Tick label="多重曲面" checked />
          <Tick label="网格" checked />
        </div>
        <button aria-label="展开" className="mr-[2px] mt-[40px] h-6 w-5 text-[18px] leading-4">»</button>
      </div>
      <div className="ml-[9px] flex min-h-0 flex-col border-t border-[#cfd1da]">
        <div className="flex h-[31px] items-center gap-[6px] pl-[45px]">
          <span className="text-[16px]">视图属性</span>
          <span className="h-[3px] flex-1 border-y border-[#cfd1da]" />
        </div>
        <div className="flex h-[25px] items-center gap-[21px] pl-[47px]">
          <svg viewBox="0 0 20 20" className="size-5"><circle cx="10" cy="12" r="7" fill="#26399a" /><path d="M12 4h7v4z" fill="#222" /></svg>
          <svg viewBox="0 0 20 20" className="size-5" stroke="#444"><path d="M7 9l6-7c2-1 5 1 4 4l-6 7z" fill="#d8602c" /><path d="M7 9l4 4-3 4c-2 2-6 0-5-3z" fill="#fff" /></svg>
          <svg viewBox="0 0 20 20" className="size-5" stroke="#5a4300"><path d="M2 16V5h6l2 2h7v9z" fill="#f2b632" /><path d="M2 16l4-7h13l-3 7z" fill="#ffe07a" /></svg>
          <svg viewBox="0 0 20 20" className="size-5" stroke="#333"><rect x="2" y="2" width="17" height="17" fill="#fff" /><path d="M2 2h17v3H2z" fill="#3d59b8" /><circle cx="10.500" cy="12" r="6" fill="#5472d8" stroke="none" /><text x="10.500" y="16" textAnchor="middle" fontSize="11" fontWeight="bold" fill="#fff" stroke="none">?</text></svg>
          <svg viewBox="0 0 20 20" className="size-5"><path d="M1 2l18 3-9 7z" fill="#ee4a2a" stroke="#611" /><path d="M1 2l9 10v3L2 8z" fill="#c8321a" /><path d="M2 8l8 7 9-10v5l-9 7-7-6z" fill="#fff" stroke="#889" strokeWidth=".5" /><path d="M2 11l8 6 9-7v4l-9 5-7-4z" fill="#1c3f96" /></svg>
          <Gear c="#b9bccb" />
        </div>
        <div className="flex min-h-0 flex-col border border-[#c4c7d6] pr-px">
          <div className="flex h-[45px] items-start gap-2 pl-[56px] pt-[7px]">
            <svg viewBox="0 0 24 28" className="h-7 w-6"><circle cx="19" cy="5" r="4.500" fill="#4a62c4" /><circle cx="13" cy="12" r="5" fill="#2c3f9a" /><circle cx="6" cy="21" r="6" fill="#23318a" /><circle cx="17.500" cy="4" r="1.500" fill="#dfe5ff" /><circle cx="12" cy="10" r="1.500" fill="#dfe5ff" /></svg>
            <button aria-label="视图" className="flex h-7 w-[30px] items-center justify-center border-2 border-[#5d6369] bg-[#9fadb9]">
              <span className="h-[15px] w-5 border-2 border-[#e0504a] bg-white" />
            </button>
          </div>
          <div className="flex h-[498px]">
            <div className="mr-2 flex-1 overflow-hidden pl-[9px]">
              <table className="w-full table-fixed border-collapse">
                <colgroup><col className="w-[23px]" /><col className="w-[90px]" /><col /></colgroup>
                {sections.map((s) => (
                  <tbody key={s.title}>
                    <tr><th colSpan={3} className={s.title === "视窗" ? "h-[37px] pl-[38px] pt-[5px] text-left text-[18px] font-normal leading-6" : "h-[33px] text-left text-[18px] font-normal leading-6"}>{s.title}</th></tr>
                    {s.rows.map((r, i) => (
                      <tr key={i} className="h-[27px]">
                        <td />
                        <td className="h-[27px] whitespace-nowrap border-y border-r border-[#d9dbe3] p-0 text-[16px] leading-6">{r.label}</td>
                        <td className="h-[27px] border-y border-[#d9dbe3] p-0 align-middle">
                          <Value row={r} />
                        </td>
                      </tr>
                    ))}
                  </tbody>
                ))}
              </table>
            </div>
            <div className="flex w-[22px] flex-col bg-[#f0f0f2]">
              <button aria-label="向上滚动" className="flex h-5 items-center justify-center"><Chevron up /></button>
              <div className="h-[348px] bg-[#cdcdcf]" />
              <button aria-label="向下滚动" className="mt-auto flex h-5 items-center justify-center"><Chevron /></button>
            </div>
          </div>
        </div>
      </div>
    </aside>
  );
}

/* ---------- Grasshopper window ---------- */
const Sep = () => <span className="ml-[6px] mr-[5px] h-[62px] w-0 self-center border-l border-[#b4b4b4]" />;

function RibbonPanel({ panel }: { panel: Panel }) {
  return (
    <section className="overflow-hidden rounded-md border border-[#8b8b8b] bg-gradient-to-b from-[#cfcfcf] to-[#f3f3f3]">
      <div className="flex h-[72px] px-px">
        {panel.groups.map((g, i) => (
          <div key={i} className="flex">
            {i > 0 && <Sep />}
            <div className="grid grid-flow-col grid-rows-2 content-center">
              {g.map((c) => (
                <button key={c.name} aria-label={c.name} className="flex h-[35px] w-[35px] items-center justify-center">{c.icon}</button>
              ))}
            </div>
          </div>
        ))}
      </div>
      <div className="flex h-4 items-center bg-[#222] font-['Liberation_Mono',monospace] text-[10px] leading-3 text-white">
        <span className="flex-1 text-center">{panel.title}</span>
        {panel.more && <span className="w-4 text-center text-[14px] font-bold leading-3 text-[#999]">+</span>}
      </div>
    </section>
  );
}

function Param({ className }: { className: string }) {
  return (
    <div className={className}>
      <svg viewBox="0 0 76 32" className="h-8 w-[76px]" fill="none">
        <circle cx="6" cy="16" r="4.500" fill="#fff" stroke="#000" strokeWidth="2" />
        <circle cx="69" cy="16" r="4.500" fill="#fff" stroke="#000" strokeWidth="2" />
        <rect x="6.500" y=".5" width="62" height="30" rx="3" fill="#e2e2e2" stroke="#333" />
        <path d="M9 3h57v10H9z" fill="#f6f6f6" />
        <polygon points="30,2.500 45,2.500 52,16 45,29.500 30,29.500 23,16" fill="url(#hx)" stroke="#000" />
        <g stroke="#ddd"><ellipse cx="37.500" cy="16" rx="11.500" ry="7" transform="rotate(-42 37.500 16)" strokeWidth="2.500" /><ellipse cx="38" cy="14" rx="6" ry="3.500" transform="rotate(-42 38 14)" strokeWidth="1.500" /><path d="M35 17l5-5" /></g>
      </svg>
    </div>
  );
}

function Canvas() {
  return (
    <div className="relative min-h-0 flex-1 overflow-hidden bg-[#d4cfc8]">
      <svg className="absolute inset-0 size-full" fill="none">
        <g stroke="#b9b4ad">
          {[169, 357, 544, 732, 920].map((x) => <path key={x} d={`M${x}.5 0v487`} />)}
          {[10, 72, 135, 197, 260, 322, 385, 447].map((y) => <path key={y} d={`M0 ${y}.5h928`} />)}
        </g>
        <g stroke="#59564f" strokeWidth="3">
          <path d="M154 217C210 217 205 234 266 234M167 285C220 285 210 259 266 259M622 10C640 10 645 4 652-4" />
        </g>
        <g fill="#fff" stroke="#000" strokeWidth="2">
          <circle cx="269" cy="234" r="4.500" /><circle cx="269" cy="259" r="4.500" /><circle cx="269" cy="284" r="4.500" />
          <circle cx="356" cy="259" r="4.500" /><circle cx="621" cy="10" r="4.500" />
        </g>
      </svg>
      <Param className="absolute left-[80px] top-[201px]" />
      <Param className="absolute left-[92px] top-[270px]" />
      <div className="absolute left-[270px] top-[219px] flex h-[81px] w-[86px] items-center justify-between rounded border border-[#5a0a0a] bg-gradient-to-b from-[#e0282c] to-[#cf0404] pb-[2px] pl-[5px] pr-[13px] text-[15px] leading-[25px] text-[#6e0808] shadow-[inset_0_9px_3px_-2px_#e88a8a]">
        <div className="flex w-4 flex-col items-end"><span>R</span><span>S</span><span>M</span></div>
        <svg viewBox="0 0 24 24" className="size-6"><path d="M2 20C2 12 5 8 10 6L8 3l12-2-2 8-3-2c-4 1-9 4-11 13z" fill="#2a1600" /><path d="M3 22c1-8 6-12 12-13l6-5v11c-6 0-9 2-10 8z" fill="#ffb41c" stroke="#b85a00" strokeWidth=".6" /></svg>
        <span>S</span>
      </div>
      <svg viewBox="0 0 20 20" className="absolute left-[334px] top-[200px] size-5"><path d="M3 1h14l2 2v10l-2 2h-5l-2 4-2-4H3l-2-2V3z" fill="#f04a1c" stroke="#8a3a2a" /><path d="M3 3h14v4H3z" fill="#f9b39a" /></svg>
      <div className="absolute left-[395px] top-[-8px] flex h-[31px] w-[227px] rounded-b border border-[#444] bg-[#e4e2df] text-[15px] text-[#111]">
        <label htmlFor="radius" className="flex w-[60px] items-center justify-center rounded-bl border-r-2 border-[#444] bg-[#a2a1b2] pt-1">Radius</label>
        <div className="grid flex-1 items-center pt-1">
          <svg viewBox="0 0 164 20" className="col-start-1 row-start-1 h-5 w-[164px]" fill="none">
            <path d="M11 10h142M11 5v6m57-6v6m14-6v6m14-6v6m14-6v6m14-6v6m14-6v6m15-6v6" stroke="#aaa" />
            <path d="M25 3h38v14H25z" fill="#e4e2df" />
            <path d="M32 6l4 4-4 4-4-4z" fill="#fff" stroke="#000" strokeWidth="2" />
            <text x="42" y="15" fontSize="15" fill="#111" fontFamily="Noto Sans">15</text>
          </svg>
          <input id="radius" type="range" min="0" max="100" defaultValue="15" className="col-start-1 row-start-1 h-4 w-full opacity-0" />
        </div>
      </div>
      <div className="absolute right-[-4px] top-[-4px] h-[55px] w-[130px] rounded-b border border-[#222] bg-[#fffa56]" />
      <svg viewBox="0 0 64 60" className="absolute bottom-[9px] right-[8px] h-[60px] w-16">
        <path d="M2 12l9-4 3 5 3 1c3-6 8-8 10-8 3-3 7-3 9-1 4-3 8-1 8 1l-1 5-12 1-11 8-8 12-3 1c-3-2-3-7-1-10l1-4-3-1z" fill="#000" />
        <circle cx="36" cy="32" r="24.500" fill="url(#ball)" stroke="#222" strokeWidth="1.500" />
        <circle cx="36" cy="32" r="23" fill="none" stroke="#fff" strokeWidth="2" />
        <path d="M15 23l5-7 4 6zM52 14l-7 4-1-6zM21 51l6-4 0 6zM50 42l7 0-3 6z" fill="#fff" />
      </svg>
      <div className="absolute bottom-0 left-0 flex h-[35px] w-[184px] items-center gap-[11px] border border-l-0 border-black bg-gradient-to-b from-[#f0f0f0] to-[#969696] pl-[6px] shadow-[inset_-8px_0_0_#8a8a8a] [&_svg]:size-6">
        <button aria-label="Panel"><Scribble /></button>
        <button aria-label="Slider"><SliderBox /></button>
        <button aria-label="Series"><svg viewBox="0 0 24 24"><path d="M8 2h7v20H8z" fill="#6fd02a" stroke="#3a8a0a" /><path d="M9 11h8V8l6 4-6 4v-3H9z" fill="#d01414" stroke="#600" strokeWidth=".7" /><text x="0" y="16" fontSize="10" fontWeight="bold" fill="#111" fontFamily="Liberation Sans">N</text></svg></button>
        <button aria-label="Dispatch"><svg viewBox="0 0 24 24"><circle cx="6" cy="5" r="3" fill="#fff" stroke="#111" strokeWidth="1.500" /><path d="M2 9h8l6 6 2-2 2 9-9-1 2-2-5-6H2z" fill="#111" /><path d="M11 9l4-4-2-2 8-1v7l-3-1-4 4z" fill="#d01414" /></svg></button>
        <button aria-label="Deconstruct"><svg viewBox="0 0 24 24"><path d="M12 5L4 14m8-9v9m0-9l8 9" stroke="#333" strokeWidth="1.500" strokeDasharray="3 1" /><circle cx="12" cy="4" r="2" fill="#fff" stroke="#333" /><text x="12" y="23" textAnchor="middle" fontSize="8.500" fill="#222" fontFamily="DejaVu Sans">X Y Z</text></svg></button>
      </div>
    </div>
  );
}

function Grasshopper() {
  return (
    <div className="absolute left-[774px] top-[110px] flex h-[760px] w-[934px] flex-col border border-[#1c78b4] bg-[#f0f0f0] text-black shadow-[0_2px_14px_rgba(0,0,0,0.5)]">
      <header className="flex h-[37px] shrink-0 items-center bg-[#0078d7] pl-[9px] text-[15px] text-white">
        <span className="flex-1">Grasshopper - unnamed</span>
        <button aria-label="Minimize" className="flex w-[58px] justify-center"><svg viewBox="0 0 14 14" className="size-[14px]"><path d="M1 6.500h12" stroke="#fff" /></svg></button>
        <button aria-label="Maximize" className="flex w-[58px] justify-center"><svg viewBox="0 0 14 14" className="size-[14px]"><path d="M1.500 1.500h11v11h-11z" fill="none" stroke="#fff" /></svg></button>
        <button aria-label="Close" className="flex w-[60px] justify-center"><svg viewBox="0 0 14 14" className="size-[14px]"><path d="M1 1l12 12M13 1L1 13" stroke="#fff" strokeWidth="1.200" /></svg></button>
      </header>
      <nav className="flex h-[34px] shrink-0 items-center gap-[21px] bg-[#fbfbfb] pl-[15px] pr-[11px] text-[16px]">
        {["File", "Edit", "View", "Display", "Solution", "Help"].map((m) => <button key={m}>{m}</button>)}
        <span className="ml-auto text-[15px]">unnamed</span>
      </nav>
      <div className="flex h-7 shrink-0 font-['Liberation_Mono',monospace] text-[13px] text-[#6c6c6c]">
        <button className="w-[68px] rounded-t-lg border border-b-0 border-[#9a9a9a] bg-white text-black">Params</button>
        <div className="flex flex-1 items-center gap-5 border-b border-[#9a9a9a] pl-[9px] pt-1">
          {["Maths", "Sets", "Vector", "Curve", "Surface", "Mesh", "Intersect", "Transform", "Display", "Kangaroo2"].map((t) => <button key={t}>{t}</button>)}
        </div>
      </div>
      <div className="flex h-[107px] shrink-0 items-start gap-[5px] rounded-tr-lg border-b-2 border-[#6e6e6e] bg-gradient-to-b from-[#d6d6d6] to-[#f1f1f1] pl-1 pt-[3px]">
        {panels.map((p) => <RibbonPanel key={p.title} panel={p} />)}
      </div>
      <div className="mx-[2px] flex h-[38px] shrink-0 items-center bg-gradient-to-b from-[#fbfbfb] to-[#f2f2f2] pl-[1px] [&_button_svg]:size-[30px]">
        <button aria-label="Open" className="mr-[7px]"><G><path d="M5 14V4l10-2 9 5v9z" fill="#eee" stroke="#777" /><path d="M3 29V15l8 0 3-3h14v17z" fill="url(#gn)" stroke="#2f7a0c" strokeWidth="1.500" /></G></button>
        <button aria-label="Save"><G><path d="M2 2h26l2 2v26H5l-3-3z" fill="#2a6ae0" stroke="#123a8a" strokeWidth="1.500" /><path d="M7 2h18v13H7z" fill="#eef" /><path d="M9 6h14M9 10h14" stroke="#9ab" /><path d="M9 20h14v10H9z" fill="#c5ccd8" /><path d="M12 22h4v7h-4z" fill="#24418a" /></G></button>
        <span className="ml-[6px] mr-[5px] h-6 border-l border-[#bbb]" />
        <div className="grid h-7 w-[180px] items-center border border-[#8a8a8a] bg-white">
          <select aria-label="Zoom" className="col-start-1 row-start-1 w-full appearance-none bg-transparent pl-[3px] text-[15px]"><option>125%</option></select>
          <span className="pointer-events-none col-start-1 row-start-1 mr-1 justify-self-end"><Chevron /></span>
        </div>
        <button aria-label="Zoom extents" className="ml-[5px]"><G><path d="M4 12V4h8M20 4h8v8M28 20v8h-8M12 28H4v-8" stroke="#111" strokeWidth="5" /><path d="M13 13l6 6m0-6l-6 6" stroke="#111" strokeWidth="2.500" /></G></button>
        <span className="ml-2"><Caret /></span>
        <button aria-label="Preview" className="ml-[9px]"><G><path d="M1 17C8 6 24 6 31 17 24 26 8 26 1 17z" fill="#fff" stroke="#222" strokeWidth="1.800" /><circle cx="16" cy="16" r="8" fill="#3fa0dc" stroke="#145" /><circle cx="16" cy="16" r="3.500" fill="#000" /></G></button>
        <span className="ml-2"><Caret /></span>
        <button aria-label="Sketch" className="ml-[5px]"><G><path d="M13 18L27 4c3 1 4 4 3 9l-11 12z" fill="url(#rd)" /><path d="M13 18l6 7-8 3z" fill="#f2b84a" stroke="#a33" /><path d="M2 16c6-2 3 4 2 8s3 6 9 4" stroke="#222" strokeWidth="2.500" /></G></button>
        <div className="ml-auto flex items-center gap-1 pr-[2px]">
          <button aria-label="No preview"><G><path d="M6 12l9-10c6-1 11 3 12 8l-7 9H9z" fill="#e8e8e8" stroke="#999" /><ellipse cx="20" cy="8" rx="4" ry="6" transform="rotate(-55 20 8)" fill="#bbb" /><ellipse cx="16" cy="23" rx="12" ry="7.500" fill="#eee" stroke="#222" /><path d="M4 22c4-6 20-6 24 0-4 5-20 5-24 0z" fill="#333" /></G></button>
          <button aria-label="Wireframe"><G><Drum top="#fff" side="#f2f2f2" line="#555" /><path d="M3 18c2-4 14 3 14 9M7 18c3-1 6 3 6 6" stroke="#777" /></G></button>
          <button aria-label="Shaded" className="flex size-[34px] items-center justify-center border border-[#2a7ab0] bg-white"><G><Drum top="#e0443a" side="url(#rd)" line="#6a0806" /></G></button>
          <span className="mx-[5px] h-6 border-l border-[#bbb]" />
          <button aria-label="Selected only"><G><path d="M2 3l6 2 4 22z" fill="#ccc" /><path d="M1 3l9 4" stroke="#222" strokeWidth="1.500" /><path d="M9 10c4-7 12-8 17-4s5 8 2 12l-8 10c-7-2-9-8-7-13z" fill="#12a08e" stroke="#064" /><ellipse cx="21" cy="10" rx="5" ry="8" transform="rotate(-48 21 10)" fill="#2cc0ac" stroke="#064" /><ellipse cx="22" cy="10" rx="3" ry="5" transform="rotate(-48 22 10)" fill="#0a6a60" /><path d="M14 25l10 4" stroke="#222" strokeWidth="1.500" /></G></button>
          <button aria-label="Document preview"><G><Drum top="#b4e04a" side="#5c9e14" line="#2c5a08" /><path d="M6 13l14 13-3 3C8 29 1 21 3 17z" fill="#e8e8e8" stroke="#777" /><path d="M1 7l27 21" stroke="#222" strokeWidth="1.500" /></G></button>
          <button aria-label="Preview quality"><G><circle cx="16" cy="16" r="13.500" fill="#ddd" stroke="#555" strokeWidth="1.500" /><path d="M16 2.500a13.500 13.500 0 0 0 0 27z" fill="#e8871c" /></G></button>
          <span className="h-6 border-l border-[#bbb]" />
          <button aria-label="Mesh quality"><G><path d="M11 4l10 0 7 7-1 11-7 6-10-1-6-7 0-10z" fill="#7fb4f0" stroke="#1c3f86" strokeWidth="1.800" /><path d="M10 8l9-1 4 7-8 4-7-4z" fill="#b4d6fb" /></G></button>
          <Caret />
        </div>
      </div>
      <div className="mx-[2px] flex min-h-0 flex-1"><Canvas /></div>
      <footer className="flex h-[27px] shrink-0 items-center border-t border-white px-2 text-[15px]">
        <span className="flex-1">...</span>
        <span className="mr-[22px] text-[16px] text-[#7d7d7d]">1.0.0007</span>
        <svg viewBox="0 0 12 12" className="size-3 self-end" fill="#999"><path d="M9 1h2v2H9zM9 5h2v2H9zM9 9h2v2H9zM5 5h2v2H5zM5 9h2v2H5zM1 9h2v2H1z" /></svg>
      </footer>
    </div>
  );
}

/* ---------- page ---------- */
const menu = ["文件(F)", "编辑(E)", "查看(V)", "曲线(C)", "曲面(S)", "细分物件(U)", "实体(O)", "网格(M)", "尺寸标注(D)", "变动(T)", "工具(L)", "分析(A)", "渲染(R)", "面板(P)", "说明(H)"];
const tabs = ["标准", "工作平面", "设置视图", "显示", "选取", "工作视窗配置", "可见性", "变动", "曲线工具"];
const snaps: [string, boolean][] = [["端点", false], ["最近点", false], ["点", true], ["中点", true], ["中心点", true], ["交点", true], ["垂点", false], ["切点", false], ["四分点", true], ["节点", false], ["顶点", false]];
const modes: [string, boolean, string][] = [
  ["锁定格点", true, "w-[76px]"],
  ["正交", false, "w-[46px]"],
  ["平面模式", true, "w-[76px]"],
  ["物件锁点", true, "w-[76px]"],
  ["智慧轨迹", true, "w-[76px]"],
  ["操作轴", true, "w-[60px]"],
  ["记录建构历史", false, "w-[106px]"],
  ["过滤器", false, "w-[61px]"],
];

export default function App() {
  return (
    <div className="relative flex h-screen flex-col overflow-hidden bg-[#eaecf0] font-['Noto_Sans','Noto_Sans_CJK_SC',sans-serif] text-[#2b2b33]">
      <Gradients />
      <header className="flex h-7 shrink-0 items-center bg-white text-[#8c8c8c]">
        <svg viewBox="0 0 20 20" className="ml-[2px] mr-[5px] size-5"><path d="M0 0h20v20H0z" fill="#000" /><path d="M3 1c0 4 1 6 4 8 3-1 5-3 6-7l4 6c1 4-3 8-8 11-2-3-6-5-7-10z" fill="#eee" /><path d="M6 3l3 5M15 1l3 5M9 19l2-6" stroke="#aaa" fill="none" /></svg>
        <h1 className="flex-1 text-[16px]">Rhinoceros 7 ä¼ä¸šç‰ˆ - [Perspective]</h1>
        <div className="flex text-[#666]">
          <button aria-label="最小化" className="flex w-[58px] justify-center"><svg viewBox="0 0 14 14" className="size-3" stroke="currentColor"><path d="M1 7.500h12" /></svg></button>
          <button aria-label="还原" className="flex w-[58px] justify-center"><svg viewBox="0 0 14 14" className="size-[14px]" stroke="currentColor" fill="none"><path d="M1.500 4.500h8v8h-8zM4.500 4V1.500h8v8H10" /></svg></button>
          <button aria-label="关闭" className="flex w-[62px] justify-center"><svg viewBox="0 0 14 14" className="size-[14px]" stroke="currentColor"><path d="M1 1l12 12M13 1L1 13" /></svg></button>
        </div>
      </header>
      <nav className="flex h-[25px] shrink-0 items-center gap-4 bg-white pl-[7px] text-[15px] text-[#6a6a6a]">
        {menu.map((m) => <button key={m} className="whitespace-nowrap">{m}</button>)}
      </nav>

      <section className="mt-1 flex h-[61px] shrink-0 border-l-8 border-[#e2e4ea] bg-white">
        <div className="flex min-w-0 flex-1 flex-col text-black">
          <div className="flex h-[37px] flex-col justify-end overflow-hidden border-b border-[#c9ccd6] pl-[2px] text-[15px] leading-6">
            <p className="shrink-0">指令: _Undo</p>
            <p className="shrink-0">正在复原 操作轴移动</p>
          </div>
          <label className="flex h-[21px] items-center pl-[2px] text-[15px] font-bold leading-5">指令:
            <input aria-label="指令" className="flex-1 bg-transparent pl-1 font-normal outline-none" />
          </label>
        </div>
        <div className="flex w-[22px] flex-col items-center pr-[2px]">
          <button aria-label="上一行" className="flex h-[18px] items-center"><Chevron up /></button>
          <button aria-label="下一行" className="flex h-[20px] items-center"><Chevron /></button>
          <button aria-label="上一条" className="flex h-[10px] w-[18px] items-center justify-center border border-[#aaa] bg-[#eee]"><svg viewBox="0 0 8 4" className="h-1 w-2"><path d="M0 4h8L4 0z" /></svg></button>
          <button aria-label="下一条" className="mt-px flex h-[10px] w-[18px] items-center justify-center border border-[#aaa] bg-[#eee]"><svg viewBox="0 0 8 4" className="h-1 w-2"><path d="M0 0h8L4 4z" /></svg></button>
        </div>
      </section>

      <div className="mt-[3px] flex h-[35px] shrink-0 items-center border-b border-t border-[#cfd1da] pl-[28px] pr-[2px] pt-[5px] text-[16px]">
        <div className="flex flex-1 gap-[37px]">
          {tabs.map((t) => <button key={t} className="whitespace-nowrap leading-6">{t}</button>)}
        </div>
        <Gear c="#8f8f99" />
      </div>
      <div className="flex h-[41px] shrink-0 items-start pl-[9px] pt-[2px]">
        {topGroups.map((g, i) => (
          <div key={i} className="flex items-center">
            {i > 0 && <span className="ml-[3px] mr-[2px] h-[26px] border-l border-[#c4c7d0]" />}
            {g.map((c) => <button key={c.name} aria-label={c.name} className="flex size-7 items-center justify-center">{c.icon}</button>)}
          </div>
        ))}
      </div>

      <main className="flex min-h-0 flex-1">
        <aside className="w-[65px] shrink-0 pt-[4px]">
          <div className="mx-1 mb-[2px] h-[3px] border-y border-[#cfd1da]" />
          <div className="ml-px grid w-[56px] grid-cols-2">
            {leftIcons.map((c) => <button key={c.name} aria-label={c.name} className="flex size-7 items-center justify-center">{c.icon}</button>)}
          </div>
        </aside>
        <div className="flex min-w-0 flex-1 flex-col">
          <Viewport />
          <div className="flex h-[29px] shrink-0 items-center text-[16px]">
            <button className="mr-4 h-[28px] w-[107px] rounded-bl-xl border border-t-0 border-[#c4c7d6] pl-1">Perspective</button>
            <button className="mr-[22px]">Top</button>
            <button className="mr-[21px]">Front</button>
            <button className="mr-[22px]">Right</button>
            <button aria-label="新增视图"><svg viewBox="0 0 14 14" className="size-3"><path d="M5 1h3v4h4v3H8v4H5V8H1V5h4z" fill="#fff" stroke="#888" /></svg></button>
          </div>
        </div>
        <RightPanel />
      </main>

      <div className="flex h-[39px] shrink-0 items-center gap-2 border-b border-[#c4c7d6] pl-3 pt-1">
        {snaps.map(([label, on]) => <Tick key={label} label={label} checked={on} />)}
        <Tick label="投影" disabled />
        <span className="w-[8px]" />
        <Tick label="停用" disabled />
      </div>
      <footer className="flex h-[22px] shrink-0 items-center overflow-hidden whitespace-nowrap text-[16px] leading-6 [&>*]:h-full [&>*]:shrink-0 [&>*]:border-r [&>*]:border-[#c9ccd9] [&>*:last-child]:border-r-0">
        <span className="w-[75px] pl-[5px]">工作平面</span>
        <span className="w-[108px] text-center text-[15px]">x 318.91</span>
        <span className="w-[108px] text-center text-[15px]">y -52.43</span>
        <span className="w-[108px] text-center text-[15px]">z 0.00</span>
        <span className="w-[108px] text-center">毫米</span>
        <span className="flex w-[208px] items-center gap-1 pl-1"><span className="size-[14px] bg-black" />默认</span>
        {modes.map(([label, on, w]) => (
          <button key={label} className={`${w} ${on ? "bg-[#cfd9f0] font-bold" : ""}`}>{label}</button>
        ))}
        <span className="pl-[2px] text-[15px]">绝对公差: 0.01</span>
      </footer>

      <Grasshopper />

      <div className="absolute left-[1400px] top-[858px] flex h-[30px] w-[139px] items-center gap-2 rounded-md bg-[#333] pl-2 text-[21px] text-[#c4c4c4]">
        <svg viewBox="0 0 30 30" className="h-[30px] w-[30px]" fill="none" stroke="#1e9be0" strokeWidth="2.500"><path d="M1.500 8.500h27v13h-27zM15 0v30" /></svg>
        <span className="w-5 leading-5">°,</span>
        <span className="leading-5">半</span>
        <svg viewBox="0 0 26 22" className="h-[22px] w-[26px]"><path d="M7 1c2 4 10 4 12 0l6 5-3 6-3-1v10H7V11l-3 1-3-6z" fill="#d2d2d2" /></svg>
      </div>

      <div className="absolute bottom-[34px] right-[34px] flex h-10 w-[97px] items-center gap-1 rounded bg-[#f1f2f5]/90 pl-[6px] shadow-[0_1px_3px_rgba(0,0,0,0.2)]">
        <div className="w-[64px] text-black">
          <p className="text-center font-['Noto_Serif_CJK_SC','Noto_Sans_CJK_SC',serif] text-[20px] font-black leading-[22px]">学犀牛</p>
          <p className="text-[10px] font-bold leading-3">xuexiniu.com</p>
        </div>
        <p className="w-[18px] bg-[#c8374e] text-center text-[9px] font-bold leading-[10px] text-white">中<br />文<br />网</p>
      </div>
      <div className="absolute bottom-[25px] right-0 flex h-16 w-[11px] items-end rounded-full border-[3px] border-[#757575] bg-white">
        <span className="h-[36px] w-full rounded-full bg-[#e8803c]" />
      </div>
    </div>
  );
}
